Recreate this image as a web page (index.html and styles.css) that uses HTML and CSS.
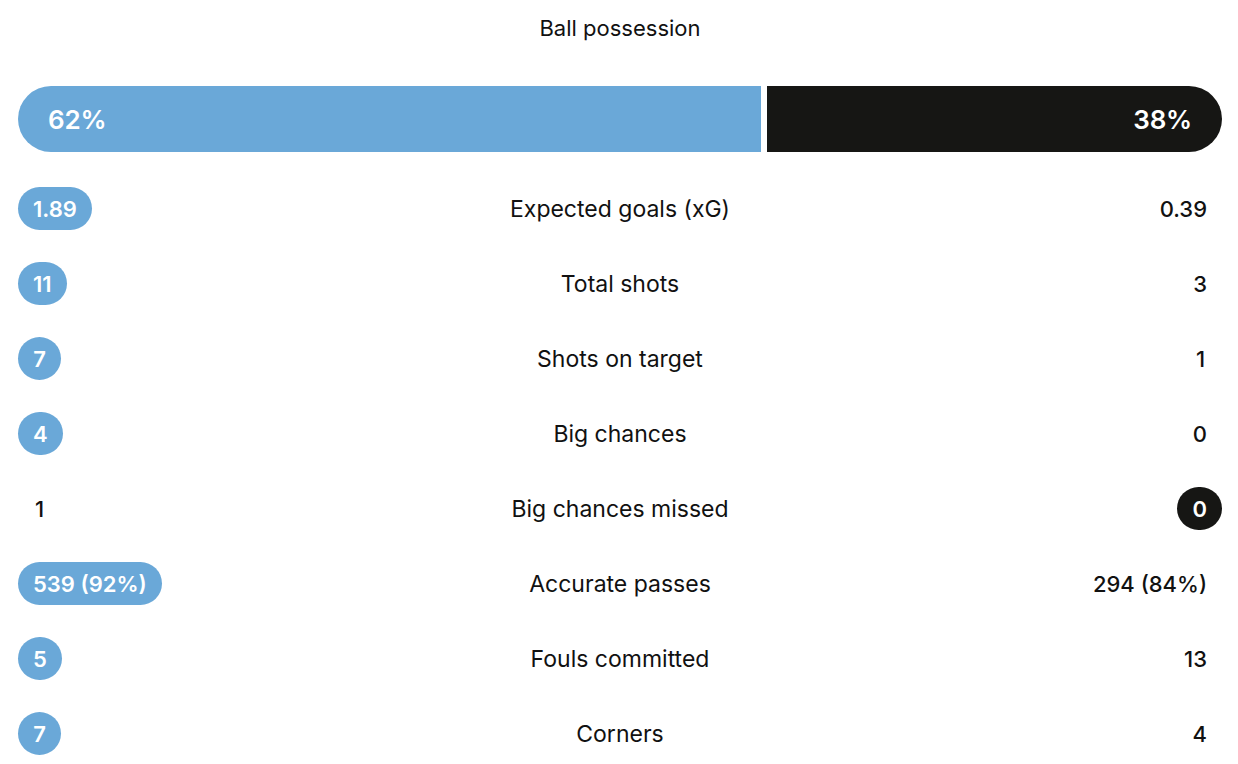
FILE: index.html
```html
<!DOCTYPE html>
<html lang="en">
<head>
<meta charset="utf-8">
<title>Match stats</title>
<link rel="stylesheet" href="styles.css">
</head>
<body>
<section class="stats">
  <h2 class="title">Ball possession</h2>
  <div class="possession">
    <div class="seg seg-home" style="width: 62%">62%</div>
    <div class="seg seg-away" style="width: 38%">38%</div>
  </div>

  <div class="row">
    <div class="side side-home"><span class="val hl-home">1.89</span></div>
    <div class="label">Expected goals (xG)</div>
    <div class="side side-away"><span class="val">0.39</span></div>
  </div>
  <div class="row">
    <div class="side side-home"><span class="val hl-home">11</span></div>
    <div class="label">Total shots</div>
    <div class="side side-away"><span class="val">3</span></div>
  </div>
  <div class="row">
    <div class="side side-home"><span class="val hl-home">7</span></div>
    <div class="label">Shots on target</div>
    <div class="side side-away"><span class="val">1</span></div>
  </div>
  <div class="row">
    <div class="side side-home"><span class="val hl-home">4</span></div>
    <div class="label">Big chances</div>
    <div class="side side-away"><span class="val">0</span></div>
  </div>
  <div class="row">
    <div class="side side-home"><span class="val">1</span></div>
    <div class="label">Big chances missed</div>
    <div class="side side-away"><span class="val hl-away">0</span></div>
  </div>
  <div class="row">
    <div class="side side-home"><span class="val hl-home">539 (92%)</span></div>
    <div class="label">Accurate passes</div>
    <div class="side side-away"><span class="val">294 (84%)</span></div>
  </div>
  <div class="row">
    <div class="side side-home"><span class="val hl-home">5</span></div>
    <div class="label">Fouls committed</div>
    <div class="side side-away"><span class="val">13</span></div>
  </div>
  <div class="row">
    <div class="side side-home"><span class="val hl-home">7</span></div>
    <div class="label">Corners</div>
    <div class="side side-away"><span class="val">4</span></div>
  </div>
</section>
</body>
</html>
```

FILE: styles.css
```css
html, body {
  margin: 0;
  padding: 0;
  background: #ffffff;
}

body {
  font-family: Inter, "Noto Sans", "Liberation Sans", sans-serif;
  color: #111111;
}

.stats {
  padding: 12px 16px 0 18px;
}

.title {
  margin: 0 0 42px;
  font-size: 22px;
  line-height: 32px;
  font-weight: 400;
  text-align: center;
  color: #111;
}

.possession {
  display: flex;
  gap: 6px;
  height: 66px;
  margin-bottom: 19px;
}

.seg {
  display: flex;
  align-items: center;
  box-sizing: border-box;
  flex: 0 1 auto;
  font-size: 26px;
  font-weight: 600;
  color: #ffffff;
  letter-spacing: -0.2px;
}

.seg-home {
  background: #6aa8d8;
  border-radius: 33px 0 0 33px;
  padding-left: 30px;
}

.seg-away {
  background: #161614;
  border-radius: 0 33px 33px 0;
  justify-content: flex-end;
  padding-right: 30px;
}

.row {
  display: grid;
  grid-template-columns: 1fr auto 1fr;
  align-items: center;
  height: 75px;
}

.side {
  display: flex;
}

.side-away {
  justify-content: flex-end;
}

.label {
  font-size: 23px;
  text-align: center;
  color: #111;
  padding-top: 1px;
}

.val {
  display: inline-flex;
  align-items: center;
  justify-content: center;
  height: 43px;
  min-width: 43px;
  box-sizing: border-box;
  padding: 1px 15px 0;
  border-radius: 22px;
  font-size: 22px;
  font-weight: 500;
  color: #111;
}

.hl-home {
  background: #6aa8d8;
  color: #ffffff;
  font-weight: 600;
}

.hl-away {
  background: #161614;
  color: #ffffff;
  font-weight: 600;
}
```
